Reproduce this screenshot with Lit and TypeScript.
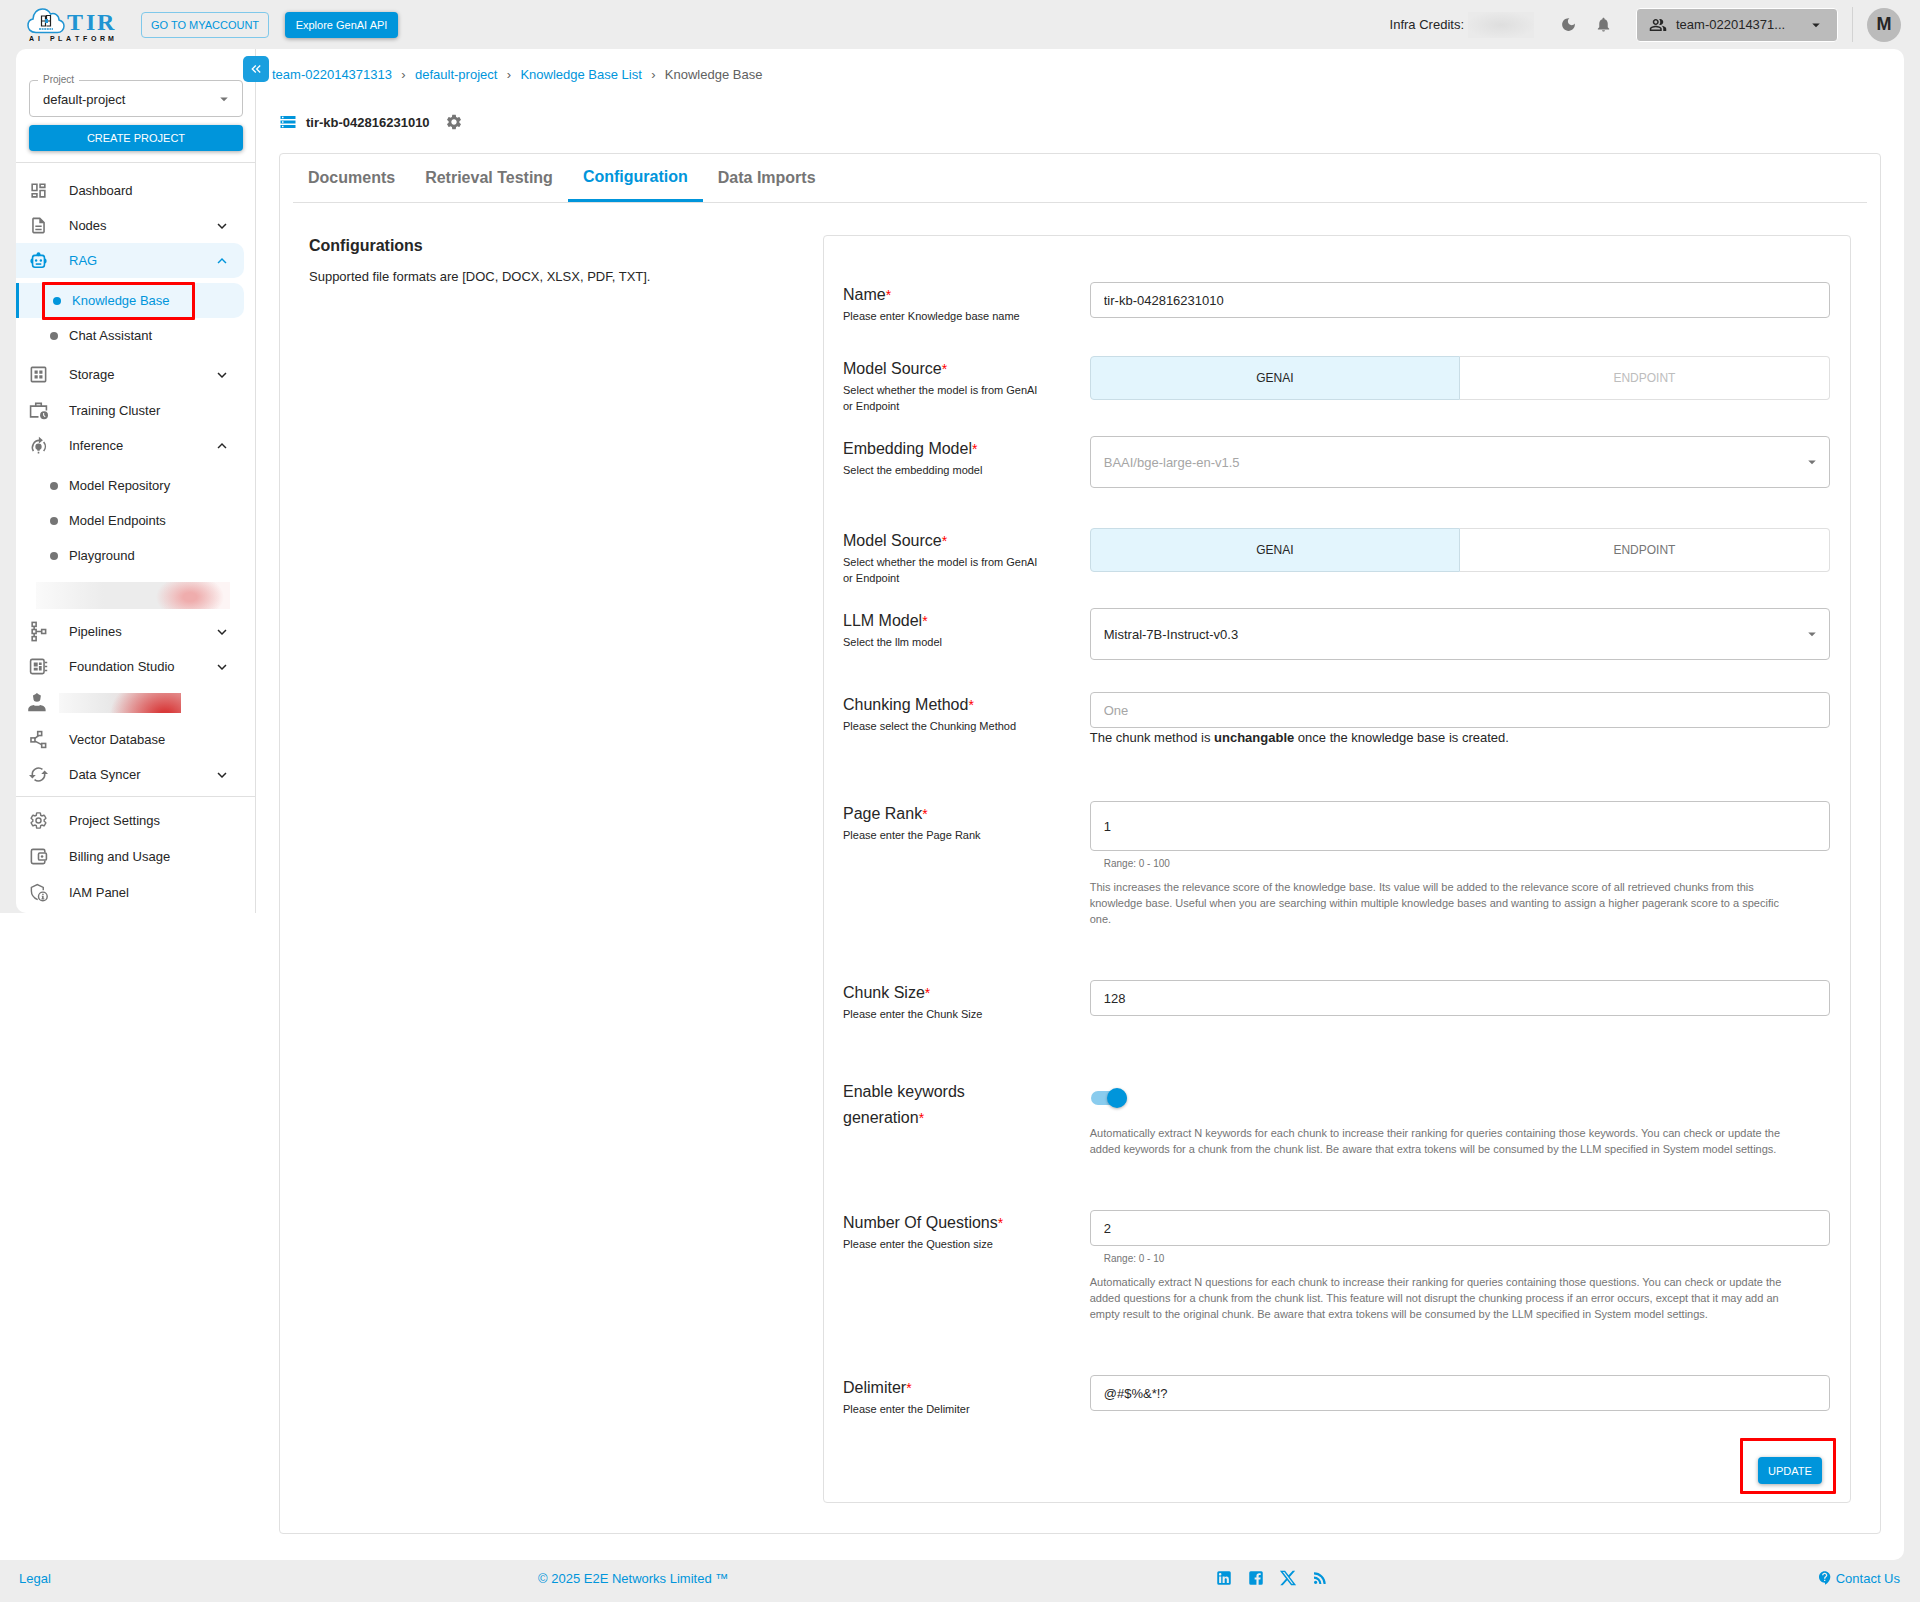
import { LitElement, html, css, svg, nothing, TemplateResult } from "lit";
import { customElement, property, state } from "lit/decorators.js";
import { classMap } from "lit/directives/class-map.js";

const gearOuter =
  "M19.14 12.94c.04-.3.06-.61.06-.94 0-.32-.02-.64-.07-.94l2.03-1.58c.18-.14.23-.41.12-.61l-1.92-3.32c-.12-.22-.37-.29-.59-.22l-2.39.96c-.5-.38-1.03-.7-1.62-.94l-.36-2.54c-.04-.24-.24-.41-.48-.41h-3.84c-.24 0-.43.17-.47.41l-.36 2.54c-.59.24-1.13.57-1.62.94l-2.39-.96c-.22-.08-.47 0-.59.22L2.74 8.87c-.12.21-.08.47.12.61l2.03 1.58c-.05.3-.09.63-.09.94s.02.64.07.94l-2.03 1.58c-.18.14-.23.41-.12.61l1.92 3.32c.12.22.37.29.59.22l2.39-.96c.5.38 1.03.7 1.62.94l.36 2.54c.05.24.24.41.48.41h3.84c.24 0 .44-.17.47-.41l.36-2.54c.59-.24 1.13-.56 1.62-.94l2.39.96c.22.08.47 0 .59-.22l1.92-3.32c.12-.22.07-.47-.12-.61l-2.01-1.58z";

const p = (d: string) => svg`<path fill="currentColor" d=${d}></path>`;

const icons: Record<string, TemplateResult> = {
  dashboard: p(
    "M19 5v2h-4V5h4M9 5v6H5V5h4m10 8v6h-4v-6h4M9 17v2H5v-2h4M21 3h-8v6h8V3zM11 3H3v10h8V3zm10 8h-8v10h8V11zm-10 4H3v6h8v-6z"
  ),
  document: p(
    "M8 16h8v2H8zm0-4h8v2H8zm6-10H6c-1.1 0-2 .9-2 2v16c0 1.1.89 2 1.99 2H18c1.1 0 2-.9 2-2V8l-6-6zm4 18H6V4h7v5h5v11z"
  ),
  robot: svg`
    <g fill="none" stroke="currentColor" stroke-width="2">
      <rect x="4.500" y="5.500" width="15" height="15" rx="3"></rect>
      <path d="M8.500 16.500h7"></path>
    </g>
    <g fill="currentColor">
      <circle cx="12" cy="4" r="2.500"></circle>
      <path d="M4 9a3.800 3.800 0 0 0 0 7zM20 9a3.800 3.800 0 0 1 0 7z"></path>
      <circle cx="9" cy="12" r="1.500"></circle><circle cx="15" cy="12" r="1.500"></circle>
    </g>`,
  storage: svg`
    <rect x="3" y="3" width="18" height="18" rx="1" fill="none" stroke="currentColor" stroke-width="2"></rect>
    <path fill="currentColor" d="M7 7h4v4H7zM13 7h4v4h-4zM7 13h4v4H7zM13 13h4v4h-4z"></path>`,
  training: svg`
    <path fill="none" stroke="currentColor" stroke-width="2" d="M12 20H2V6.500h20V12M8.500 6.500V3h7v3.500"></path>
    <circle cx="19" cy="18" r="5" fill="currentColor"></circle>
    <path fill="none" stroke="#fff" stroke-width="1.300" d="M18.500 15v3l2 2"></path>`,
  inference: svg`
    <g fill="none" stroke="currentColor" stroke-width="2">
      <path d="M5.500 19A9 9 0 0 1 13 5.500M18.500 19a9 9 0 0 0 0-11.500"></path>
    </g>
    <g fill="currentColor">
      <path d="M12.500 1l5 4.500-5 4z"></path>
      <circle cx="12" cy="13.500" r="4"></circle>
      <path d="M10.500 16h3v2.500h-3zM11 20h2v2h-2z"></path>
    </g>`,
  pipelines: svg`
    <g fill="none" stroke="currentColor" stroke-width="2">
      <rect x="4" y="0.500" width="5" height="5"></rect>
      <rect x="4" y="9.500" width="5" height="5"></rect>
      <rect x="4" y="18.500" width="5" height="5"></rect>
      <rect x="16" y="9.500" width="5" height="5"></rect>
      <path d="M6.500 5.500v4M6.500 14.500v4M9 12h7"></path>
    </g>`,
  studio: svg`
    <rect x="2" y="3" width="17" height="18" rx="2" fill="none" stroke="currentColor" stroke-width="2"></rect>
    <path fill="currentColor" d="M6 7h5v5H6zM12.500 7H16v3h-3.500zM6 13.500h5V17H6zM12.500 11.500H16V17h-3.500zM20 6h3v2h-3zM20 11h3v2h-3zM20 16h3v2h-3z"></path>`,
  worker: svg`
    <path fill="currentColor" d="M5 3l3-1.500L10 0l2 1.500L15 3l-.5 3.500a4.500 4.500 0 1 1-9 0zM-1 21c0-4 4-5.500 7-6 1.500 1.500 6.500 1.500 8 0 3 .5 7 2 7 6v2H-1z"></path>`,
  vector: svg`
    <g fill="none" stroke="currentColor" stroke-width="2">
      <rect x="11" y="2" width="5" height="5"></rect>
      <rect x="2.500" y="10" width="5" height="5"></rect>
      <rect x="16" y="17" width="5" height="5"></rect>
      <path d="M12 7l-5 4M7.500 14l8.500 4.500"></path>
    </g>`,
  sync: svg`
    <g fill="none" stroke="currentColor" stroke-width="2">
      <path d="M4.500 14A8 8 0 0 1 17 5.500M19.500 10A8 8 0 0 1 7 18.500"></path>
    </g>
    <path fill="currentColor" d="M0 12.500h8.500l-4.200 4.500zM24 11.500h-8.500l4.200-4.500z"></path>`,
  gearOutline: svg`
    <path fill="none" stroke="currentColor" stroke-width="1.800" d=${gearOuter}></path>
    <circle cx="12" cy="12" r="3.200" fill="none" stroke="currentColor" stroke-width="1.800"></circle>`,
  gear: p(gearOuter + "M12 15.600c-1.980 0-3.600-1.620-3.600-3.600s1.620-3.600 3.600-3.600 3.600 1.620 3.600 3.600-1.620 3.600-3.600 3.600z"),
  wallet: svg`
    <g fill="none" stroke="currentColor" stroke-width="2">
      <path d="M20 7V5a2 2 0 0 0-2-2H5a2 2 0 0 0-2 2v14a2 2 0 0 0 2 2h13a2 2 0 0 0 2-2v-2"></path>
      <rect x="12" y="7.500" width="10" height="9" rx="1.500"></rect>
    </g>
    <circle cx="16.500" cy="12" r="1.600" fill="currentColor"></circle>`,
  shield: svg`
    <path fill="none" stroke="currentColor" stroke-width="1.800" d="M11 21C5.500 18.500 3 15 3 10V5.500L10.500 2 18 5.500V9"></path>
    <circle cx="17.500" cy="17" r="5.500" fill="none" stroke="currentColor" stroke-width="1.800"></circle>
    <path fill="currentColor" d="M16.700 13.500h1.800v1.800h-1.800zM16 16h2.500v3.500h1v1.200h-4v-1.200h1v-2.300H16z"></path>`,
  down: p("M16.590 8.590 12 13.170 7.410 8.590 6 10l6 6 6-6z"),
  up: p("M12 8l-6 6 1.410 1.410L12 10.830l4.590 4.580L18 14z"),
  caret: p("M7 10l5 5 5-5z"),
  collapse: p(
    "M17.590 18 19 16.590 14.420 12 19 7.410 17.590 6l-6 6zM11 18l1.410-1.410L7.830 12l4.580-4.590L11 6l-6 6z"
  ),
  moon: p(
    "M12 3c-4.970 0-9 4.030-9 9s4.030 9 9 9 9-4.030 9-9c0-.46-.04-.92-.1-1.360-.98 1.370-2.580 2.260-4.400 2.260-2.980 0-5.400-2.420-5.400-5.400 0-1.810.89-3.420 2.260-4.400-.44-.06-.9-.1-1.360-.1z"
  ),
  bell: p(
    "M12 22c1.100 0 2-.9 2-2h-4c0 1.100.89 2 2 2zm6-6v-5c0-3.070-1.640-5.640-4.500-6.320V4c0-.83-.67-1.500-1.500-1.500s-1.500.67-1.500 1.500v.68C7.630 5.360 6 7.920 6 11v5l-2 2v1h16v-1l-2-2z"
  ),
  people: p(
    "M16.670 13.130C18.040 14.060 19 15.320 19 17v3h4v-3c0-2.180-3.570-3.470-6.330-3.870zM15 12c2.210 0 4-1.790 4-4s-1.790-4-4-4c-.47 0-.91.1-1.330.24C14.500 5.270 15 6.580 15 8s-.5 2.730-1.330 3.760c.42.14.86.24 1.330.24zM9 12c2.210 0 4-1.790 4-4s-1.790-4-4-4-4 1.790-4 4 1.790 4 4 4zm0-6c1.100 0 2 .9 2 2s-.9 2-2 2-2-.9-2-2 .9-2 2-2zM9 13c-2.670 0-8 1.340-8 4v3h16v-3c0-2.660-5.330-4-8-4zm6 5H3v-.99C3.200 16.290 6.300 15 9 15s5.800 1.290 6 2v1z"
  ),
  stack: p(
    "M2 20h20v-4H2v4zm2-3h2v2H4v-2zM2 4v4h20V4H2zm4 3H4V5h2v2zm-4 7h20v-4H2v4zm2-3h2v2H4v-2z"
  ),
  linkedin: p(
    "M19 3a2 2 0 0 1 2 2v14a2 2 0 0 1-2 2H5a2 2 0 0 1-2-2V5a2 2 0 0 1 2-2h14m-.5 15.500v-5.300a3.260 3.260 0 0 0-3.260-3.260c-.85 0-1.840.52-2.320 1.300v-1.110h-2.790v8.370h2.790v-4.930c0-.77.62-1.400 1.390-1.400a1.400 1.400 0 0 1 1.400 1.400v4.930h2.790M6.880 8.560a1.680 1.680 0 0 0 1.680-1.680c0-.93-.75-1.690-1.680-1.690a1.690 1.690 0 0 0-1.690 1.690c0 .93.76 1.680 1.690 1.680m1.390 9.940v-8.370H5.500v8.370h2.770z"
  ),
  facebook: p(
    "M5 3h14a2 2 0 0 1 2 2v14a2 2 0 0 1-2 2h-3.500v-7h2.300l.4-2.700h-2.700V9.600c0-.8.4-1.500 1.500-1.500h1.300V5.800s-1-.2-2.100-.2c-2.200 0-3.600 1.300-3.600 3.700v2h-2.400V14h2.400v7H5a2 2 0 0 1-2-2V5a2 2 0 0 1 2-2z"
  ),
  x: p(
    "M18.244 2.250h3.308l-7.227 8.260 8.502 11.240H16.170l-5.214-6.817L4.990 21.750H1.680l7.730-8.835L1.254 2.250H8.080l4.713 6.231zm-1.161 17.520h1.833L7.084 4.126H5.117z"
  ),
  rss: p(
    "M6.180 15.640a2.180 2.180 0 0 1 2.180 2.180C8.360 19 7.380 20 6.180 20 5 20 4 19 4 17.820a2.180 2.180 0 0 1 2.180-2.180M4 4.440A15.560 15.560 0 0 1 19.560 20h-2.830A12.730 12.730 0 0 0 4 7.270V4.440m0 5.660a9.900 9.900 0 0 1 9.900 9.900h-2.830A7.070 7.070 0 0 0 4 12.930V10.100z"
  ),
  help: p(
    "M11.500 2C6.810 2 3 5.810 3 10.500S6.810 19 11.500 19h.5v3c4.860-2.340 8-7 8-11.500C20 5.810 16.190 2 11.500 2zm1 14.500h-2v-2h2v2zm0-3.500h-2c0-3.250 3-3 3-5 0-1.100-.9-2-2-2s-2 .9-2 2h-2c0-2.210 1.790-4 4-4s4 1.790 4 4c0 2.500-3 2.750-3 5z"
  ),
};

const icon = (name: string, cls = "") =>
  html`<svg class="icon ${cls}" viewBox="0 0 24 24" aria-hidden="true">${icons[name]}</svg>`;

const base = css`
  * {
    box-sizing: border-box;
  }
  :host {
    display: block;
    font-family: "Liberation Sans", Arial, Helvetica, sans-serif;
    font-size: 13px;
    color: #262626;
  }
  button,
  input,
  select {
    font: inherit;
    color: inherit;
    margin: 0;
  }
  button {
    cursor: pointer;
  }
  a {
    color: #0095db;
    text-decoration: none;
  }
  .icon {
    width: 20px;
    height: 20px;
    flex: none;
    display: block;
    overflow: visible;
  }
  .solid {
    border: 0;
    border-radius: 4px;
    background: #0095db;
    color: #fff;
    font-size: 11px;
    height: 26px;
    box-shadow: 0 1px 4px rgba(0, 0, 0, 0.35);
  }
  .marked {
    position: relative;
  }
  .marked::after {
    content: "";
    position: absolute;
    border: 3px solid #ff0000;
    border-radius: 1px;
    pointer-events: none;
  }
`;

@customElement("app-header")
export class AppHeader extends LitElement {
  static styles = [
    base,
    css`
      .bar {
        display: flex;
        align-items: center;
        height: 49px;
        padding: 0 19px 0 27px;
        background: #ededed;
      }
      .logo {
        width: 90px;
        height: 38px;
        display: block;
        margin-right: 24px;
      }
      .word {
        font: bold 24px "Liberation Serif", serif;
        fill: #2094d2;
      }
      .tag {
        font: bold 7px "Liberation Sans", sans-serif;
        fill: #111;
      }
      .outline {
        height: 26px;
        width: 128px;
        padding: 0;
        border: 1px solid #7fc8ea;
        border-radius: 4px;
        background: none;
        color: #0095db;
        font-size: 11px;
        margin-right: 16px;
        white-space: nowrap;
      }
      .explore {
        width: 113px;
        padding: 0;
      }
      .right {
        margin-left: auto;
        display: flex;
        align-items: center;
      }
      .redacted {
        width: 66px;
        height: 26px;
        margin: 0 26px 0 4px;
        background: radial-gradient(ellipse at center, #dedede, #eaeaea 75%);
      }
      .tool {
        padding: 0;
        border: 0;
        background: none;
        color: #757575;
        margin-right: 18px;
      }
      .tool .icon {
        width: 17px;
        height: 17px;
      }
      .team {
        width: 202px;
        height: 34px;
        display: flex;
        align-items: center;
        gap: 9px;
        padding: 0 12px 0 12px;
        margin-left: 6px;
        border: 1px solid #fff;
        border-radius: 4px;
        background: #bbb;
        text-align: left;
      }
      .team .icon {
        width: 18px;
        height: 18px;
      }
      .team .name {
        flex: 1;
      }
      .avatar {
        width: 34px;
        height: 34px;
        padding: 0;
        border: 0;
        border-radius: 50%;
        background: #bbb;
        font-size: 18px;
        font-weight: bold;
      }
      .rule {
        width: 1px;
        height: 35px;
        background: #d3d3d3;
        margin: 0 14px;
      }
    `,
  ];

  render() {
    return html`<header class="bar">
      <svg class="logo" viewBox="0 0 90 38" role="img" aria-label="TIR AI Platform">
        <path
          d="M9 26.500C3 26.500 1 22.500 1 19.500 1 16 3 13.500 6 13 6 7.500 10 3 15.500 3 19 3 22 5 23.500 8c4-1.500 8.500 1 8.500 6 3 1 5 3 5 6 0 4-3 6.500-6.500 6.500z"
          fill="#fff"
          stroke="#2094d2"
          stroke-width="1.500"
        ></path>
        <path
          d="M14.500 10h4v5h-4zM14.500 15h4v5h-4zM19.500 9.500h4V15h-4zM19.500 15h4v5h-4"
          fill="none"
          stroke="#222"
          stroke-width="1.200"
        ></path>
        <path d="M18 13h3v4h-3z" fill="#2094d2"></path>
        <path d="M12 23h14" stroke="#2094d2" stroke-width="1.500" stroke-dasharray="2 .6"></path>
        <text class="word" x="40 59 70" y="24">TIR</text>
        <text class="tag" x="2 11 16 23 31 39 48 56 64 73 81" y="35">AI PLATFORM</text>
      </svg>
      <button class="outline">GO TO MYACCOUNT</button>
      <button class="solid explore">Explore GenAI API</button>
      <div class="right">
        <span>Infra Credits:</span>
        <span class="redacted"></span>
        <button class="tool" aria-label="Dark mode">${icon("moon")}</button>
        <button class="tool" aria-label="Notifications">${icon("bell")}</button>
        <button class="team">${icon("people")}<span class="name">team-022014371...</span>${icon("caret")}</button>
        <span class="rule"></span>
        <button class="avatar">M</button>
      </div>
    </header>`;
  }
}

interface NavItem {
  label?: string;
  icon?: string;
  open?: boolean;
  group?: boolean;
  active?: boolean;
  redacted?: string;
  children?: { label: string; current?: boolean }[];
}

const navMain: NavItem[] = [
  { label: "Dashboard", icon: "dashboard" },
  { label: "Nodes", icon: "document", group: true },
  {
    label: "RAG",
    icon: "robot",
    group: true,
    open: true,
    active: true,
    children: [{ label: "Knowledge Base", current: true }, { label: "Chat Assistant" }],
  },
  { label: "Storage", icon: "storage", group: true },
  { label: "Training Cluster", icon: "training" },
  {
    label: "Inference",
    icon: "inference",
    group: true,
    open: true,
    children: [{ label: "Model Repository" }, { label: "Model Endpoints" }, { label: "Playground" }],
  },
  { redacted: "wide" },
  { label: "Pipelines", icon: "pipelines", group: true },
  { label: "Foundation Studio", icon: "studio", group: true },
  { icon: "worker", redacted: "narrow" },
  { label: "Vector Database", icon: "vector" },
  { label: "Data Syncer", icon: "sync", group: true },
];

const navFoot: NavItem[] = [
  { label: "Project Settings", icon: "gearOutline" },
  { label: "Billing and Usage", icon: "wallet" },
  { label: "IAM Panel", icon: "shield" },
];

@customElement("app-sidebar")
export class AppSidebar extends LitElement {
  static styles = [
    base,
    css`
      :host {
        position: relative;
        padding-left: 16px;
        background: #ededed;
      }
      .panel {
        background: #fff;
        border-right: 1px solid #e0e0e0;
        border-radius: 10px 0 0 10px;
        padding-bottom: 3px;
      }
      .project {
        padding: 25px 12px 11px 13px;
        border-bottom: 1px solid #e0e0e0;
      }
      .picker {
        margin: 0 0 8px;
        padding: 0;
        border: 1px solid #c4c4c4;
        border-radius: 4px;
        min-width: 0;
        display: grid;
        align-items: center;
      }
      .picker legend {
        font-size: 10px;
        line-height: 12px;
        color: #757575;
        margin-left: 8px;
        padding: 0 5px;
      }
      .picker select,
      .picker .caret {
        grid-area: 1 / 1;
      }
      .picker select {
        appearance: none;
        border: 0;
        background: none;
        height: 30px;
        width: 100%;
        padding: 0 13px 4px;
      }
      .picker .caret {
        justify-self: end;
        width: 18px;
        height: 18px;
        margin: 0 9px 4px 0;
        color: #757575;
        pointer-events: none;
      }
      .create {
        width: 100%;
      }
      .collapse {
        position: absolute;
        top: 7px;
        right: -13px;
        width: 26px;
        height: 26px;
        padding: 5px;
        border: 0;
        border-radius: 5px;
        background: #1a9fdf;
        color: #fff;
        z-index: 1;
      }
      .collapse .icon {
        width: 16px;
        height: 16px;
      }
      .list {
        display: flex;
        flex-direction: column;
        padding: 9px 11px 4px 0;
      }
      .foot {
        border-top: 1px solid #e0e0e0;
        padding: 5px 11px 0 0;
      }
      .item {
        display: flex;
        align-items: center;
        width: 100%;
        height: 36px;
        padding: 0 13px;
        border: 0;
        background: none;
        text-align: left;
        color: #262626;
      }
      .item.group {
        height: 35px;
      }
      .item .icon {
        color: #757575;
        width: 19px;
        height: 19px;
      }
      .item .text {
        flex: 1;
        margin-left: 21px;
      }
      .item .chev {
        width: 18px;
        height: 18px;
        margin-right: 0;
        color: #262626;
      }
      .item.active {
        color: #0095db;
        background: #ebf6fd;
        border-radius: 0 10px 10px 0;
      }
      .item.active .icon {
        color: #0095db;
      }
      .sub {
        display: flex;
        flex-direction: column;
        padding: 5px 0 4px;
      }
      .leaf {
        display: flex;
        align-items: center;
        height: 35px;
        padding-left: 34px;
        color: #262626;
      }
      .leaf::before {
        content: "";
        width: 8px;
        height: 8px;
        border-radius: 50%;
        background: #757575;
        margin-right: 11px;
      }
      .leaf.current {
        color: #0095db;
        background: #ebf6fd;
        border-left: 3px solid #0095db;
        border-radius: 0 10px 10px 0;
      }
      .leaf.current::before {
        background: #0095db;
      }
      .leaf.marked::after {
        inset: -1px 49px -2px 23px;
      }
      .item.hidden {
        height: 37px;
      }
      .blur {
        display: block;
      }
      .blur.wide {
        width: 194px;
        height: 27px;
        margin-left: 7px;
        background: radial-gradient(ellipse 34px 22px at 154px 15px, #efadad 20%, rgba(239, 173, 173, 0) 100%),
          linear-gradient(90deg, #fafafa, #ececec 35%, #ececec 65%, #fdf5f5 95%);
      }
      .blur.narrow {
        width: 122px;
        height: 20px;
        margin-left: 11px;
        background: radial-gradient(ellipse 55px 40px at 106px 22px, #d83a3a 10%, rgba(216, 80, 80, 0) 100%),
          linear-gradient(90deg, #f8f8f8, #e9e9e9 40%, #eccaca 90%);
      }
    `,
  ];

  @state() private collapsed = false;

  private renderItem(item: NavItem) {
    if (item.redacted) {
      return html`<div class="item hidden">
        ${item.icon ? icon(item.icon) : nothing}<span class="blur ${item.redacted}"></span>
      </div>`;
    }
    if (!item.group) {
      return html`<a class="item" href="#">${icon(item.icon!)}<span class="text">${item.label}</span></a>`;
    }
    return html`<button
        class=${classMap({ item: true, group: true, active: !!item.active })}
        aria-expanded=${item.open ? "true" : "false"}
      >
        ${icon(item.icon!)}<span class="text">${item.label}</span>${icon(item.open ? "up" : "down", "chev")}
      </button>
      ${item.children
        ? html`<div class="sub">
            ${item.children.map(
              (c) => html`<a class=${classMap({ leaf: true, current: !!c.current, marked: !!c.current })} href="#"
                >${c.label}</a
              >`
            )}
          </div>`
        : nothing}`;
  }

  render() {
    return html`<div class="panel">
        <div class="project">
          <fieldset class="picker">
            <legend><label for="project">Project</label></legend>
            <select id="project">
              <option>default-project</option>
            </select>
            ${icon("caret", "caret")}
          </fieldset>
          <button class="solid create">CREATE PROJECT</button>
        </div>
        <nav class="list">${navMain.map((i) => this.renderItem(i))}</nav>
        <nav class="foot">${navFoot.map((i) => this.renderItem(i))}</nav>
      </div>
      <button
        class="collapse"
        aria-label="Collapse sidebar"
        aria-pressed=${this.collapsed ? "true" : "false"}
        @click=${() => (this.collapsed = !this.collapsed)}
      >
        ${icon("collapse")}
      </button>`;
  }
}

interface Field {
  id: string;
  label: string;
  help?: string;
  kind: "input" | "select" | "toggle" | "switch";
  value?: string;
  disabled?: boolean;
  tall?: boolean;
  range?: string;
  strongNote?: boolean;
  desc?: string;
  space: "s" | "m" | "l" | "xl" | "none";
}

const fields: Field[] = [
  {
    id: "name",
    label: "Name",
    help: "Please enter Knowledge base name",
    kind: "input",
    value: "tir-kb-042816231010",
    space: "m",
  },
  {
    id: "embedding-source",
    label: "Model Source",
    help: "Select whether the model is from GenAI or Endpoint",
    kind: "toggle",
    disabled: true,
    space: "s",
  },
  {
    id: "embedding-model",
    label: "Embedding Model",
    help: "Select the embedding model",
    kind: "select",
    value: "BAAI/bge-large-en-v1.5",
    disabled: true,
    space: "l",
  },
  {
    id: "llm-source",
    label: "Model Source",
    help: "Select whether the model is from GenAI or Endpoint",
    kind: "toggle",
    space: "s",
  },
  {
    id: "llm-model",
    label: "LLM Model",
    help: "Select the llm model",
    kind: "select",
    value: "Mistral-7B-Instruct-v0.3",
    space: "m",
  },
  {
    id: "chunking",
    label: "Chunking Method",
    help: "Please select the Chunking Method",
    kind: "input",
    value: "One",
    disabled: true,
    strongNote: true,
    space: "xl",
  },
  {
    id: "page-rank",
    label: "Page Rank",
    help: "Please enter the Page Rank",
    kind: "input",
    value: "1",
    tall: true,
    range: "Range: 0 - 100",
    desc: "This increases the relevance score of the knowledge base. Its value will be added to the relevance score of all retrieved chunks from this knowledge base. Useful when you are searching within multiple knowledge bases and wanting to assign a higher pagerank score to a specific one.",
    space: "xl",
  },
  {
    id: "chunk-size",
    label: "Chunk Size",
    help: "Please enter the Chunk Size",
    kind: "input",
    value: "128",
    space: "xl",
  },
  {
    id: "keywords",
    label: "Enable keywords generation",
    kind: "switch",
    desc: "Automatically extract N keywords for each chunk to increase their ranking for queries containing those keywords. You can check or update the added keywords for a chunk from the chunk list. Be aware that extra tokens will be consumed by the LLM specified in System model settings.",
    space: "xl",
  },
  {
    id: "questions",
    label: "Number Of Questions",
    help: "Please enter the Question size",
    kind: "input",
    value: "2",
    range: "Range: 0 - 10",
    desc: "Automatically extract N questions for each chunk to increase their ranking for queries containing those questions. You can check or update the added questions for a chunk from the chunk list. This feature will not disrupt the chunking process if an error occurs, except that it may add an empty result to the original chunk. Be aware that extra tokens will be consumed by the LLM specified in System model settings.",
    space: "xl",
  },
  {
    id: "delimiter",
    label: "Delimiter",
    help: "Please enter the Delimiter",
    kind: "input",
    value: "@#$%&*!?",
    space: "none",
  },
];

@customElement("config-field")
export class ConfigField extends LitElement {
  static styles = [
    base,
    css`
      .row {
        display: grid;
        grid-template-columns: 1fr 3fr;
      }
      .row.s {
        padding-bottom: 22px;
      }
      .row.m {
        padding-bottom: 32px;
      }
      .row.l {
        padding-bottom: 40px;
      }
      .row.xl {
        padding-bottom: 53px;
      }
      .row.lead {
        padding-top: 4px;
      }
      .side {
        padding-right: 48px;
      }
      .label {
        display: block;
        font-size: 16px;
        line-height: 26px;
      }
      .star {
        color: #ff0000;
        font-size: 14px;
      }
      .help {
        margin: 0;
        font-size: 11px;
        line-height: 16px;
      }
      .control {
        width: 100%;
        height: 36px;
        padding: 0 13px;
        border: 1px solid #c4c4c4;
        border-radius: 4px;
        background: #fff;
        color: #262626;
        display: block;
      }
      .control:disabled {
        color: #a6a6a6;
        opacity: 1;
      }
      .control.tall {
        height: 50px;
      }
      .select {
        display: grid;
        align-items: center;
      }
      .select .control,
      .select .icon {
        grid-area: 1 / 1;
      }
      .select .control {
        appearance: none;
        height: 52px;
      }
      .select .icon {
        width: 18px;
        height: 18px;
        justify-self: end;
        margin-right: 9px;
        color: #757575;
        pointer-events: none;
      }
      .toggle {
        display: grid;
        grid-template-columns: 1fr 1fr;
      }
      .opt {
        height: 44px;
        border: 1px solid #e0e0e0;
        background: #fff;
        font-size: 12px;
        color: #757575;
        border-left: 0;
        border-radius: 0 4px 4px 0;
      }
      .opt.on {
        background: #e3f5fd;
        color: #262626;
        border: 1px solid #c9dde6;
        border-radius: 4px 0 0 4px;
      }
      .opt:disabled:not(.on) {
        color: #bdbdbd;
      }
      .note {
        margin: 0;
        line-height: 20px;
      }
      .range {
        margin: 4px 14px 6px;
        font-size: 10px;
        line-height: 18px;
        color: #757575;
      }
      .desc {
        margin: 0;
        padding-right: 42px;
        font-size: 11px;
        line-height: 16px;
        color: #757575;
      }
      .flip {
        display: flex;
        align-items: center;
        height: 38px;
        margin-bottom: 8px;
      }
      .check {
        appearance: none;
        display: flex;
        align-items: center;
        width: 36px;
        height: 14px;
        margin-left: 1px;
        border-radius: 7px;
        background: #8accee;
      }
      .check::after {
        content: "";
        width: 20px;
        height: 20px;
        flex: none;
        margin-left: auto;
        border-radius: 50%;
        background: #0095db;
        box-shadow: 0 1px 3px rgba(0, 0, 0, 0.3);
      }
      .check:not(:checked)::after {
        margin-left: 0;
        background: #fff;
      }
    `,
  ];

  @property({ attribute: false }) field!: Field;
  @state() private source = "GENAI";

  private renderControl(f: Field) {
    if (f.kind === "select") {
      return html`<div class="select">
        <select id=${f.id} class="control" ?disabled=${!!f.disabled}>
          <option>${f.value}</option></select
        >${icon("caret")}
      </div>`;
    }
    if (f.kind === "toggle") {
      return html`<div class="toggle" role="group" aria-labelledby="${f.id}-label">
        ${["GENAI", "ENDPOINT"].map(
          (o) => html`<button
            class=${classMap({ opt: true, on: this.source === o })}
            aria-pressed=${this.source === o ? "true" : "false"}
            ?disabled=${!!f.disabled}
            @click=${() => (this.source = o)}
          >
            ${o}
          </button>`
        )}
      </div>`;
    }
    if (f.kind === "switch") {
      return html`<div class="flip"><input id=${f.id} class="check" type="checkbox" role="switch" checked /></div>`;
    }
    return html`<input
      id=${f.id}
      class=${classMap({ control: true, tall: !!f.tall })}
      type="text"
      .value=${f.value ?? ""}
      ?disabled=${!!f.disabled}
    />`;
  }

  render() {
    const f = this.field;
    const text = html`${f.label}<span class="star">*</span>`;
    return html`<div class=${classMap({ row: true, [f.space]: true, lead: f.kind === "switch" })}>
      <div class="side">
        ${f.kind === "toggle"
          ? html`<span class="label" id="${f.id}-label">${text}</span>`
          : html`<label class="label" for=${f.id}>${text}</label>`}
        ${f.help ? html`<p class="help">${f.help}</p>` : nothing}
      </div>
      <div>
        ${this.renderControl(f)}
        ${f.strongNote
          ? html`<p class="note">The chunk method is <b>unchangable</b> once the knowledge base is created.</p>`
          : nothing}
        ${f.range ? html`<p class="range">${f.range}</p>` : nothing}
        ${f.desc ? html`<p class="desc">${f.desc}</p>` : nothing}
      </div>
    </div>`;
  }
}

@customElement("config-page")
export class ConfigPage extends LitElement {
  static styles = [
    base,
    css`
      .page {
        padding: 16px 23px 26px 23px;
      }
      .crumbs {
        display: flex;
        align-items: center;
        gap: 9px;
        line-height: 20px;
        margin-left: -7px;
      }
      .crumbs .sep,
      .crumbs .here {
        color: #616161;
      }
      .crumbs .sep {
        width: 5px;
        text-align: center;
      }
      .title {
        display: flex;
        align-items: center;
        height: 20px;
        margin: 27px 0 21px;
      }
      .title h1 {
        margin: 0 15px 0 9px;
        font-size: 13px;
      }
      .title .stack {
        width: 18px;
        height: 20px;
        color: #0095db;
      }
      .title button {
        padding: 0;
        border: 0;
        background: none;
        color: #757575;
      }
      .title button .icon {
        width: 18px;
        height: 18px;
      }
      .card {
        border: 1px solid #e0e0e0;
        border-radius: 4px;
        padding: 0 13px 30px;
      }
      .tabs {
        display: flex;
        border-bottom: 1px solid #e0e0e0;
        height: 49px;
      }
      .tab {
        border: 0;
        background: none;
        padding: 0 15px;
        font-size: 16px;
        font-weight: bold;
        color: #757575;
      }
      .tab.on {
        color: #0095db;
        border-bottom: 3px solid #0095db;
      }
      .body {
        display: grid;
        grid-template-columns: 1fr 2fr;
        padding: 32px 16px 0;
      }
      .intro h2 {
        margin: 1px 0 11px;
        font-size: 16px;
        line-height: 20px;
      }
      .intro p {
        margin: 0;
        line-height: 20px;
      }
      .form {
        border: 1px solid #e0e0e0;
        border-radius: 4px;
        padding: 46px 20px 18px 19px;
      }
      .actions {
        display: flex;
        justify-content: flex-end;
        padding: 40px 8px 0 0;
      }
      .update {
        width: 64px;
        height: 27px;
        padding: 0;
      }
      .marked::after {
        inset: -19px -14px -10px -18px;
      }
    `,
  ];

  @state() private tab = "Configuration";

  render() {
    const tabs = ["Documents", "Retrieval Testing", "Configuration", "Data Imports"];
    return html`<main class="page">
      <nav class="crumbs" aria-label="Breadcrumb">
        ${["team-022014371313", "default-project", "Knowledge Base List"].map(
          (c) => html`<a href="#">${c}</a><span class="sep">›</span>`
        )}
        <span class="here">Knowledge Base</span>
      </nav>
      <div class="title">
        ${icon("stack", "stack")}
        <h1>tir-kb-042816231010</h1>
        <button aria-label="Settings">${icon("gear")}</button>
      </div>
      <section class="card">
        <div class="tabs" role="tablist">
          ${tabs.map(
            (t) => html`<button
              role="tab"
              class=${classMap({ tab: true, on: this.tab === t })}
              aria-selected=${this.tab === t ? "true" : "false"}
              @click=${() => (this.tab = t)}
            >
              ${t}
            </button>`
          )}
        </div>
        <div class="body">
          <div class="intro">
            <h2>Configurations</h2>
            <p>Supported file formats are [DOC, DOCX, XLSX, PDF, TXT].</p>
          </div>
          <form class="form" @submit=${(e: Event) => e.preventDefault()}>
            ${fields.map((f) => html`<config-field .field=${f}></config-field>`)}
            <div class="actions">
              <div class="marked"><button class="solid update">UPDATE</button></div>
            </div>
          </form>
        </div>
      </section>
    </main>`;
  }
}

@customElement("app-footer")
export class AppFooter extends LitElement {
  static styles = [
    base,
    css`
      .bar {
        display: flex;
        align-items: center;
        justify-content: space-between;
        height: 42px;
        padding: 0 20px 6px 19px;
        background: #ededed;
        color: #0095db;
      }
      .social {
        display: flex;
        gap: 14px;
      }
      .social .icon {
        width: 18px;
        height: 18px;
      }
      .contact {
        display: flex;
        align-items: center;
        gap: 3px;
      }
      .contact .icon {
        width: 16px;
        height: 16px;
      }
    `,
  ];

  render() {
    return html`<footer class="bar">
      <a href="#">Legal</a>
      <span>© 2025 E2E Networks Limited ™</span>
      <div class="social">
        <a href="#" aria-label="LinkedIn">${icon("linkedin")}</a>
        <a href="#" aria-label="Facebook">${icon("facebook")}</a>
        <a href="#" aria-label="X">${icon("x")}</a>
        <a href="#" aria-label="RSS">${icon("rss")}</a>
      </div>
      <a class="contact" href="#">${icon("help")}Contact Us</a>
    </footer>`;
  }
}

@customElement("app-root")
export class AppRoot extends LitElement {
  static styles = css`
    :host {
      display: flex;
      flex-direction: column;
      min-height: 100vh;
      background: #ededed;
    }
    .shell {
      flex: 1;
      display: flex;
      padding-right: 16px;
    }
    .left {
      flex: 0 0 256px;
      background: #fff;
    }
    .content {
      flex: 1;
      min-width: 0;
      background: #fff;
      border-radius: 0 10px 10px 0;
    }
  `;

  render() {
    return html`<app-header></app-header>
      <div class="shell">
        <div class="left"><app-sidebar></app-sidebar></div>
        <config-page class="content"></config-page>
      </div>
      <app-footer></app-footer>`;
  }
}
